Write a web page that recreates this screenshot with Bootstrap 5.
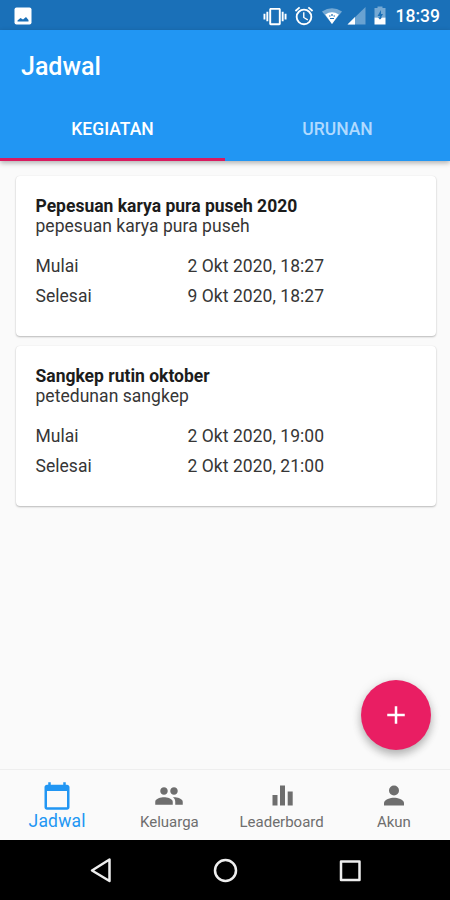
<!DOCTYPE html>
<html lang="id">
<head>
<meta charset="utf-8">
<meta name="viewport" content="width=device-width, initial-scale=1">
<title>Jadwal</title>
<link href="https://cdn.jsdelivr.net/npm/bootstrap@5.3.0/dist/css/bootstrap.min.css" rel="stylesheet">
<style>
  body { font-family: Roboto, "Liberation Sans", sans-serif; background: #fafafa; color: #363636; }
  svg { display: block; flex: none; }
  .phone { width: 450px; height: 900px; }
  .status { height: 30px; background: #1a70b8; padding: 2px 10px 0 12px; }
  .clock { font-size: 17.5px; font-weight: 500; line-height: 28px; margin-left: 5px; }
  .topbar { height: 131px; background: #2196f3; box-shadow: 0 2px 5px rgba(0,0,0,.3); z-index: 2; }
  .screen-title { font-size: 25px; font-weight: 500; line-height: 30px; padding: 22px 21px 0; height: 71px; }
  .tab-item { flex: 1 1 0; height: 60px; font-size: 17.5px; font-weight: 500; color: #b0daff; border-bottom: 3px solid transparent; }
  .tab-item.current { color: #fff; border-bottom-color: #d81b60; }
  .events { padding: 15px 14.5px 0 15.5px; gap: 10px; }
  .event { height: 160px; border-radius: 4px; padding: 20px 20px 0; background: #fff; box-shadow: 0 1px 2px rgba(0,0,0,.26), 0 0 1px rgba(0,0,0,.1); font-size: 17.5px; line-height: 20px; letter-spacing: .04px; }
  .event h2 { font-size: 17.5px; font-weight: 700; line-height: 20px; letter-spacing: 0; color: #1c1c1c; }
  .event-times { display: grid; grid-template-columns: 152px 1fr; row-gap: 10px; margin-top: 20px; }
  .fab { right: 19.5px; bottom: 19px; width: 70px; height: 70px; background: #e91e63; box-shadow: 0 5px 8px rgba(0,0,0,.24), 0 1px 12px rgba(0,0,0,.1); }
  .bottom-tabs { height: 71px; background: #fafafa; border-top: 1px solid #eee; color: #6e6e6e; font-size: 15px; line-height: 18px; }
  .bottom-tabs a { flex: 1 1 0; color: inherit; padding-top: 11px; }
  .bottom-tabs a span { margin-top: 2px; }
  .bottom-tabs a.current { color: #2196f3; font-size: 17.5px; letter-spacing: .2px; padding-left: 1px; }
  .bottom-tabs a.current span { margin-top: 0; line-height: 20px; }
  .keys { height: 60px; }
</style>
</head>
<body>
<div class="phone d-flex flex-column overflow-hidden">
  <div class="status d-flex align-items-center justify-content-between text-white">
    <svg width="22" height="22" viewBox="0 0 22 22"><rect x="2.500" y="2.500" width="17" height="17" rx="2" fill="#fff"/><path d="M5.500 16.500v-1l3-2.500 2.500 1.500 3-2.500 2.500 3v1.500z" fill="#1a70b8"/></svg>
    <div class="d-flex align-items-center">
      <svg width="24" height="23" viewBox="0 0 24 24" fill="#fff"><path d="M0 15h2V9H0v6zm3 2h2V7H3v10zm19-8v6h2V9h-2zm-3 8h2V7h-2v10zM16.500 3h-9C6.670 3 6 3.670 6 4.500v15c0 .83.670 1.500 1.500 1.500h9c.83 0 1.500-.67 1.500-1.500v-15c0-.83-.67-1.500-1.500-1.500zM16 19H8V5h8v14z"/></svg>
      <svg width="22" height="22" viewBox="0 0 24 24" fill="#fff" style="margin-left:6px"><path d="M22 5.720l-4.600-3.860-1.290 1.530 4.600 3.860L22 5.720zM7.880 3.390L6.600 1.860 2 5.710l1.290 1.530 4.590-3.850zM12.500 8H11v6l4.750 2.850.75-1.230-4-2.370V8zM12 4a9 9 0 1 0 0 18 9 9 0 0 0 0-18zm0 16a7 7 0 1 1 0-14 7 7 0 0 1 0 14z"/></svg>
      <svg width="26" height="24" viewBox="0 0 26 24" style="margin-left:4px"><path d="M3 7.500Q13 1 23 7.500L13 20z" fill="#fff" opacity=".4"/><path d="M6.200 10.500Q13 6 19.800 10.500L13 20z" fill="#fff"/><path d="M10 12h1.500m3 0H16m-5 2.500h4M13 10v2" stroke="#1a70b8" stroke-width="1.200"/></svg>
      <svg width="23" height="24" viewBox="0 0 23 24"><path d="M20.500 3v17.500H2.500z" fill="#fff" opacity=".35"/><path d="M10 13v7.500H2.500z" fill="#fff"/></svg>
      <svg width="23" height="24" viewBox="0 0 23 24"><path d="M6.500 4h3V2.500h5V4h3v9.500h-11z" fill="#fff" opacity=".4"/><path d="M6.500 13.500h3.500l2 2 2-2h3.500v7h-11z" fill="#fff"/><path d="M13 6l-3.500 6h2.300v3.500L15 10h-2z" fill="#1a70b8"/></svg>
      <span class="clock">18:39</span>
    </div>
  </div>

  <header class="topbar position-relative">
    <h1 class="screen-title text-white mb-0">Jadwal</h1>
    <nav class="d-flex">
      <div class="tab-item current d-flex align-items-center justify-content-center">KEGIATAN</div>
      <div class="tab-item d-flex align-items-center justify-content-center">URUNAN</div>
    </nav>
  </header>

  <main class="events position-relative flex-grow-1 d-flex flex-column">
    <article class="event">
      <h2 class="mb-0">Pepesuan karya pura puseh 2020</h2>
      <div>pepesuan karya pura puseh</div>
      <div class="event-times">
        <span>Mulai</span><span>2 Okt 2020, 18:27</span>
        <span>Selesai</span><span>9 Okt 2020, 18:27</span>
      </div>
    </article>
    <article class="event">
      <h2 class="mb-0">Sangkep rutin oktober</h2>
      <div>petedunan sangkep</div>
      <div class="event-times">
        <span>Mulai</span><span>2 Okt 2020, 19:00</span>
        <span>Selesai</span><span>2 Okt 2020, 21:00</span>
      </div>
    </article>
    <button class="fab position-absolute border-0 p-0 rounded-circle d-flex align-items-center justify-content-center" aria-label="Tambah">
      <svg width="30" height="30" viewBox="0 0 24 24" fill="#fff"><path d="M19 13h-6v6h-2v-6H5v-2h6V5h2v6h6z"/></svg>
    </button>
  </main>

  <nav class="bottom-tabs d-flex">
    <a class="current d-flex flex-column align-items-center text-decoration-none" href="#">
      <svg width="30" height="30" viewBox="0 0 24 24" fill="currentColor"><path d="M20 3h-1V1h-2v2H7V1H5v2H4c-1.100 0-2 .9-2 2v16c0 1.100.9 2 2 2h16c1.100 0 2-.9 2-2V5c0-1.100-.9-2-2-2zm0 18H4V8h16v13z"/></svg>
      <span>Jadwal</span>
    </a>
    <a class="d-flex flex-column align-items-center text-decoration-none" href="#">
      <svg width="30" height="30" viewBox="0 0 24 24" fill="currentColor"><path d="M16 11c1.660 0 2.990-1.340 2.990-3S17.660 5 16 5s-3 1.340-3 3 1.340 3 3 3zm-8 0c1.660 0 2.990-1.340 2.990-3S9.660 5 8 5 5 6.340 5 8s1.340 3 3 3zm0 2c-2.330 0-7 1.170-7 3.500V19h14v-2.500c0-2.330-4.670-3.500-7-3.500zm8 0c-.29 0-.62.020-.97.050 1.160.84 1.970 1.970 1.970 3.450V19h6v-2.500c0-2.330-4.670-3.500-7-3.500z"/></svg>
      <span>Keluarga</span>
    </a>
    <a class="d-flex flex-column align-items-center text-decoration-none" href="#">
      <svg width="30" height="30" viewBox="0 0 30 30" fill="currentColor"><path d="M5.500 14h5v10.500h-5zM13 4.500h5v20h-5zM20.700 10.500h5v14h-5z"/></svg>
      <span>Leaderboard</span>
    </a>
    <a class="d-flex flex-column align-items-center text-decoration-none" href="#">
      <svg width="30" height="30" viewBox="0 0 30 30" fill="currentColor"><circle cx="15" cy="9.500" r="5"/><path d="M5 24.500v-2.500c0-3.400 6.700-5.200 10-5.200s10 1.800 10 5.200v2.500z"/></svg>
      <span>Akun</span>
    </a>
  </nav>

  <div class="keys bg-black d-flex align-items-center justify-content-center">
    <svg width="450" height="60" viewBox="0 0 450 60" fill="none" stroke="#eee" stroke-width="2.500" stroke-linejoin="round"><path d="M109.500 19.500v21.500L92 30.500z"/><circle cx="225.500" cy="30.500" r="10.500"/><rect x="341" y="21.500" width="18.500" height="18.500"/></svg>
  </div>
</div>
<script src="https://cdn.jsdelivr.net/npm/bootstrap@5.3.0/dist/js/bootstrap.bundle.min.js"></script>
</body>
</html>
